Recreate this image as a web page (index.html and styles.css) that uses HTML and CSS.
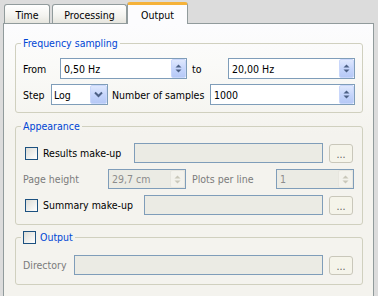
FILE: index.html
```html
<!DOCTYPE html>
<html>
<head>
<meta charset="utf-8">
<link rel="stylesheet" href="styles.css">
</head>
<body>
<div class="tabbar">
  <div class="tab t-time">Time</div>
  <div class="tab t-proc">Processing</div>
  <div class="tab t-out active">Output</div>
</div>
<div class="pane">
  <fieldset class="group g-freq">
    <legend>Frequency sampling</legend>
    <div class="row">
      <span class="lbl w-from">From</span>
      <div class="field w127"><span class="val">0,50 Hz</span><span class="spinbtn"><svg width="7" height="11" viewBox="0 0 7 11"><polygon points="0.5,4.5 3.5,1.5 6.5,4.5" fill="#4d6185"/><polygon points="0.5,6.5 3.5,9.5 6.5,6.5" fill="#4d6185"/></svg></span></div>
      <span class="lbl w-to">to</span>
      <div class="field w127"><span class="val">20,00 Hz</span><span class="spinbtn"><svg width="7" height="11" viewBox="0 0 7 11"><polygon points="0.5,4.5 3.5,1.5 6.5,4.5" fill="#4d6185"/><polygon points="0.5,6.5 3.5,9.5 6.5,6.5" fill="#4d6185"/></svg></span></div>
    </div>
    <div class="row">
      <span class="lbl w-step">Step</span>
      <div class="field combo"><span class="val">Log</span><span class="dropbtn"><svg width="9" height="7" viewBox="0 0 9 7"><path d="M1 1.5 L4.5 5 L8 1.5" fill="none" stroke="#4d6185" stroke-width="2"/></svg></span></div>
      <span class="lbl w-num">Number of samples</span>
      <div class="field w145"><span class="val">1000</span><span class="spinbtn"><svg width="7" height="11" viewBox="0 0 7 11"><polygon points="0.5,4.5 3.5,1.5 6.5,4.5" fill="#4d6185"/><polygon points="0.5,6.5 3.5,9.5 6.5,6.5" fill="#4d6185"/></svg></span></div>
    </div>
  </fieldset>

  <fieldset class="group g-app">
    <legend>Appearance</legend>
    <div class="row r20">
      <span class="check"></span>
      <span class="lbl w-results">Results make-up</span>
      <div class="field dis w189"></div>
      <span class="btn">...</span>
    </div>
    <div class="row r20">
      <span class="lbl dim w-page">Page height</span>
      <div class="field dis w78"><span class="val">29,7 cm</span><span class="spinbtn off"><svg width="7" height="11" viewBox="0 0 7 11"><polygon points="0.5,4.5 3.5,1.5 6.5,4.5" fill="#c9c7ba"/><polygon points="0.5,6.5 3.5,9.5 6.5,6.5" fill="#c9c7ba"/></svg></span></div>
      <span class="lbl dim w-plots">Plots per line</span>
      <div class="field dis w78"><span class="val">1</span><span class="spinbtn off"><svg width="7" height="11" viewBox="0 0 7 11"><polygon points="0.5,4.5 3.5,1.5 6.5,4.5" fill="#c9c7ba"/><polygon points="0.5,6.5 3.5,9.5 6.5,6.5" fill="#c9c7ba"/></svg></span></div>
    </div>
    <div class="row r20">
      <span class="check"></span>
      <span class="lbl w-summary">Summary make-up</span>
      <div class="field dis w179"></div>
      <span class="btn">...</span>
    </div>
  </fieldset>

  <fieldset class="group g-out">
    <legend><span class="check"></span><span class="ltxt">Output</span></legend>
    <div class="row r20">
      <span class="lbl dim w-dir">Directory</span>
      <div class="field dis w249"></div>
      <span class="btn">...</span>
    </div>
  </fieldset>
</div>
</body>
</html>
```

FILE: styles.css
```css
html, body {
  margin: 0;
  padding: 0;
  height: 296px;
  overflow: hidden;
}
body {
  background: #dcdcdc;
  font-family: "DejaVu Sans Condensed", "DejaVu Sans", sans-serif;
  font-stretch: condensed;
  font-size: 10.5px;
  color: #000;
}

/* tabs */
.tabbar {
  height: 23px;
  display: flex;
  align-items: flex-end;
  padding-left: 4px;
}
.tab {
  box-sizing: border-box;
  height: 19px;
  border: 1px solid #919b9c;
  border-bottom: none;
  border-radius: 3px 3px 0 0;
  background: linear-gradient(#ffffff, #f3f3ef 60%, #e6e5de);
  display: flex;
  align-items: center;
  justify-content: center;
  padding-top: 1px;
}
.t-time { width: 46px; }
.t-proc { width: 75px; margin-left: 2px; }
.t-out { width: 61px; margin-left: 0; }
.tab.active {
  height: 22px;
  margin-bottom: -1px;
  background: #fcfcfe;
  border-top: 3px solid #f5b23a;
  position: relative;
  z-index: 1;
  padding-top: 0;
}

/* pane */
.pane {
  margin-left: 3px;
  width: 371px;
  box-sizing: border-box;
  height: 274px;
  border: 1px solid #919b9c;
  background: linear-gradient(#fcfcfe 0, #fafaf8 40px, #f4f3ee 110px);
  padding-top: 1px;
}

/* group boxes */
.group {
  margin: 0 10px 0 11px;
  border: 1px solid #d0d0bf;
  border-radius: 3px;
  min-width: 0;
}
.group legend {
  margin-left: -2px;
  padding: 0 2px;
  line-height: 13px;
  height: 13px;
  color: #0046d5;
}
.g-freq { margin-top: 12px; padding: 8px 0 7px 7px; }
.g-app { margin-top: 7px; padding: 10px 0 9px 7px; }
.g-out { margin-top: 6px; padding: 11px 0 9px 7px; }

.g-freq .row + .row { margin-top: 5px; }
.g-app .row + .row { margin-top: 6px; }

.g-out legend {
  display: flex;
  align-items: center;
}
.g-out legend .ltxt { margin-left: 4px; }

.row {
  display: flex;
  align-items: center;
  height: 21px;
}
.row.r20 { height: 20px; }

.lbl { white-space: nowrap; }
.lbl.dim { color: #7b7b7b; }
.w-from { width: 37px; }
.w-to { width: 36px; padding-left: 5px; }
.w-step { width: 28px; }
.w-num { width: 98px; margin-left: 4px; }
.w-results { width: 91px; margin-left: 5px; }
.w-summary { width: 101px; margin-left: 5px; }
.w-page { width: 85px; }
.w-plots { width: 84px; margin-left: 6px; }
.w-dir { width: 51px; }

/* fields */
.field {
  box-sizing: border-box;
  height: 100%;
  border: 1px solid #7f9db9;
  background: #fff;
  display: flex;
  align-items: center;
  padding-left: 3px;
}
.field.dis { background: #ebebe4; color: #8c8c8c; }
.val { flex: 1; white-space: nowrap; }
.w127 { width: 127px; }
.w145 { width: 145px; }
.w189 { width: 189px; }
.w179 { width: 179px; }
.w78 { width: 78px; }
.w249 { width: 249px; }
.combo { width: 57px; padding-left: 2px; }

.spinbtn, .dropbtn {
  box-sizing: border-box;
  height: 100%;
  border: 1px solid #c9d7fb;
  border-radius: 2px;
  background: linear-gradient(#dfe8fd, #c4d4fb 55%, #b6c9f6);
  display: flex;
  align-items: center;
  justify-content: center;
}
.spinbtn { width: 15px; }
.dropbtn { width: 17px; }
.spinbtn.off {
  background: #f3f2ec;
  border-color: #e7e6df;
}

/* checkbox */
.check {
  box-sizing: border-box;
  width: 13px;
  height: 13px;
  border: 1px solid #1c5180;
  background: linear-gradient(135deg, #dcdcd6, #ffffff);
  flex: none;
}
.g-app .check { margin-left: 2px; }

/* buttons */
.btn {
  box-sizing: border-box;
  width: 24px;
  height: 19px;
  margin-left: 6px;
  border: 1px solid #c9c7ba;
  border-radius: 3px;
  background: #f5f4ea;
  color: #5e5e5e;
  display: flex;
  align-items: center;
  justify-content: center;
  line-height: 1;
  padding-top: 3px;
}
```
